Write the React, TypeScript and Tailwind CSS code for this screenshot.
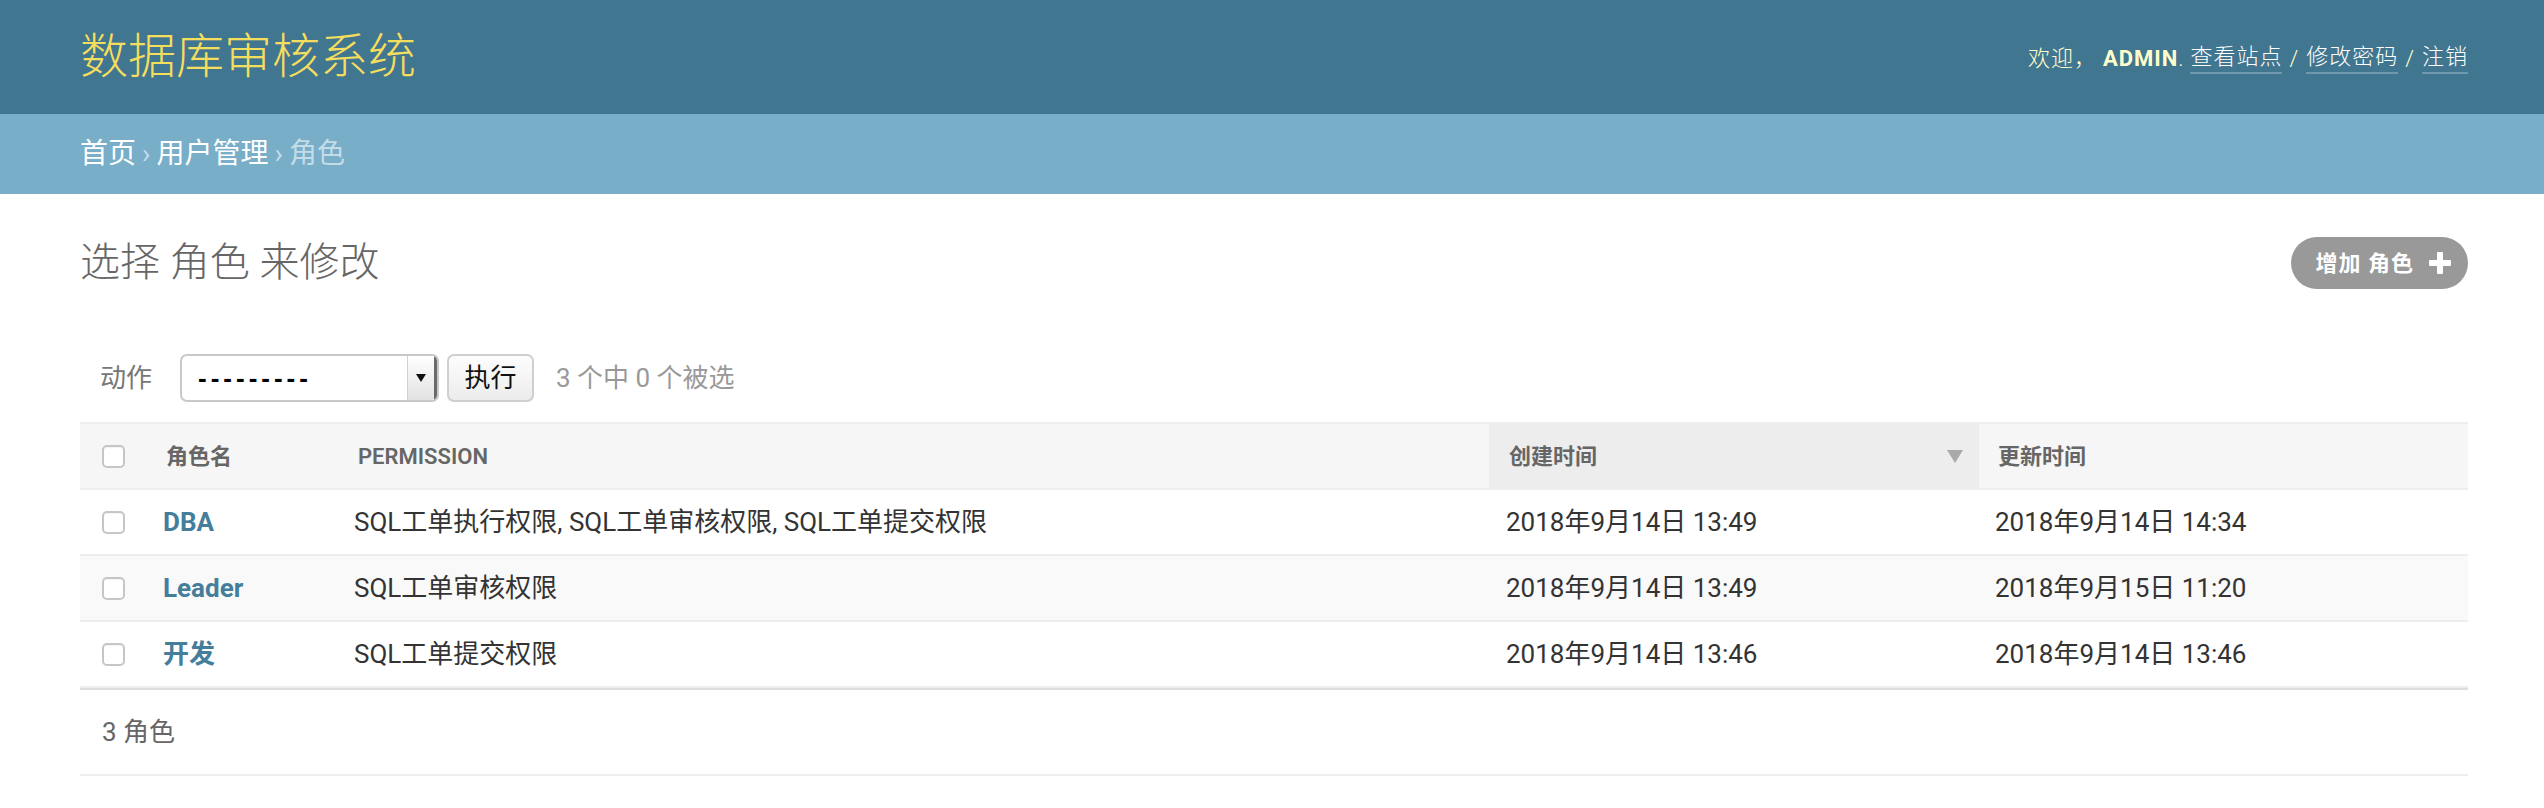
import React from "react";

const ROWS = [
  {
    name: "DBA",
    perm: "SQL工单执行权限, SQL工单审核权限, SQL工单提交权限",
    created: "2018年9月14日 13:49",
    updated: "2018年9月14日 14:34",
  },
  {
    name: "Leader",
    perm: "SQL工单审核权限",
    created: "2018年9月14日 13:49",
    updated: "2018年9月15日 11:20",
  },
  {
    name: "开发",
    perm: "SQL工单提交权限",
    created: "2018年9月14日 13:46",
    updated: "2018年9月14日 13:46",
  },
];

function Checkbox() {
  return (
    <span className="block w-[23px] h-[23px] rounded-[5px] border-2 border-[#c6c6c6] bg-white shadow-[inset_0_1px_1px_rgba(0,0,0,0.05)]" />
  );
}

export default function App() {
  return (
    <div className="w-full min-h-screen bg-white font-['Roboto','Noto_Sans_CJK_SC',sans-serif] text-[#333]">
      {/* header */}
      <div className="h-[114px] bg-[#417690] pl-[80px] pr-[76px] flex items-center justify-between">
        <h1 className="text-[48px] font-light text-[#f5dd5d] leading-none">数据库审核系统</h1>
        <div className="text-[22px] font-light tracking-[1px] text-[#ffc] uppercase flex items-center pt-[2px]">
          <span>欢迎，</span>
          <strong className="ml-[6px] font-bold">admin</strong>
          <span>.</span>
          <a className="ml-[6px] text-white border-b-2 border-white/25 leading-[30px]">查看站点</a>
          <span className="mx-[7px]">/</span>
          <a className="text-white border-b-2 border-white/25 leading-[30px]">修改密码</a>
          <span className="mx-[7px]">/</span>
          <a className="text-white border-b-2 border-white/25 leading-[30px]">注销</a>
        </div>
      </div>

      {/* breadcrumbs */}
      <div className="h-[80px] bg-[#79aec8] px-[80px] flex items-center text-[28px] text-[#c4dce8]">
        <a className="text-white">首页</a>
        <span className="mx-[6px]">›</span>
        <a className="text-white">用户管理</a>
        <span className="mx-[6px]">›</span>
        <span>角色</span>
      </div>

      {/* content */}
      <div className="pl-[80px] pr-[76px] pt-[40px]">
        <div className="h-[58px] flex items-center justify-between">
          <h1 className="text-[40px] font-light text-[#666] leading-none">选择 角色 来修改</h1>
          <a className="h-[52px] rounded-full bg-[#999] text-white flex items-center pl-[25px] pr-[17px] text-[22px] font-bold tracking-[1px]">
            <span>增加 角色</span>
            <svg width="22" height="22" viewBox="0 0 22 22" className="ml-[15px]">
              <rect x="8" y="0" width="6" height="22" rx="1" fill="#fff" />
              <rect x="0" y="8" width="22" height="6" rx="1" fill="#fff" />
            </svg>
          </a>
        </div>

        {/* actions */}
        <div className="pt-[62px] pb-[20px] pl-[20px] flex items-center h-[130px]">
          <span className="text-[26px] text-[#777]">动作</span>
          <div className="ml-[28px] w-[259px] h-[48px] rounded-[7px] border-2 border-[#c8c8c8] bg-white flex items-stretch overflow-hidden">
            <span className="flex-1 flex items-center pl-[16px] text-[26px] text-black font-['Liberation_Sans',sans-serif] font-bold tracking-[4px]">
              ---------
            </span>
            <span className="w-[30px] border-l border-[#d0d0d0] bg-gradient-to-b from-[#ffffff] to-[#e2e2e2] border-r-[3px] border-r-[#6a6a6a] flex items-center justify-center">
              <svg width="10" height="8" viewBox="0 0 10 8">
                <path d="M0 0 L10 0 L5 8 Z" fill="#111" />
              </svg>
            </span>
          </div>
          <button className="ml-[8px] w-[87px] h-[48px] rounded-[7px] border-2 border-[#cfcfcf] bg-gradient-to-b from-[#fdfdfd] to-[#ececec] text-[26px] text-[#111]">
            执行
          </button>
          <span className="ml-[22px] text-[26px] text-[#999]">3 个中 0 个被选</span>
        </div>

        {/* table */}
        <div className="w-full">
          <div className="grid grid-cols-[67px_191px_1151px_490px_1fr] h-[68px] bg-[#f6f6f6] border-t-2 border-b-2 border-[#eee] text-[22px] text-[#666] font-semibold uppercase">
            <div className="flex items-center pl-[22px]">
              <Checkbox />
            </div>
            <div className="flex items-center pl-[19px]">角色名</div>
            <div className="flex items-center pl-[20px]">Permission</div>
            <div className="flex items-center justify-between pl-[20px] pr-[16px] bg-[#ededed]">
              <span>创建时间</span>
              <svg width="16" height="13" viewBox="0 0 16 13">
                <path d="M0 0 L16 0 L8 13 Z" fill="#a9a9a9" />
              </svg>
            </div>
            <div className="flex items-center pl-[19px]">更新时间</div>
          </div>

          {ROWS.map((r, i) => (
            <div
              key={r.name}
              className={
                i % 2 === 1
                  ? "grid grid-cols-[67px_191px_1151px_490px_1fr] h-[66px] border-b-2 border-[#eee] bg-[#f9f9f9] text-[26px]"
                  : "grid grid-cols-[67px_191px_1151px_490px_1fr] h-[66px] border-b-2 border-[#eee] bg-white text-[26px]"
              }
            >
              <div className="flex items-center pl-[22px]">
                <Checkbox />
              </div>
              <div className="flex items-center pl-[16px]">
                <a className="text-[#447e9b] font-bold">{r.name}</a>
              </div>
              <div className="flex items-center pl-[16px]">{r.perm}</div>
              <div className="flex items-center pl-[17px]">{r.created}</div>
              <div className="flex items-center pl-[16px]">{r.updated}</div>
            </div>
          ))}

          <div className="h-[88px] border-t-2 border-[#ddd] border-b-2 border-b-[#eee] flex items-center pl-[22px] text-[26px] text-[#666]">
            3 角色
          </div>
        </div>
      </div>
    </div>
  );
}
